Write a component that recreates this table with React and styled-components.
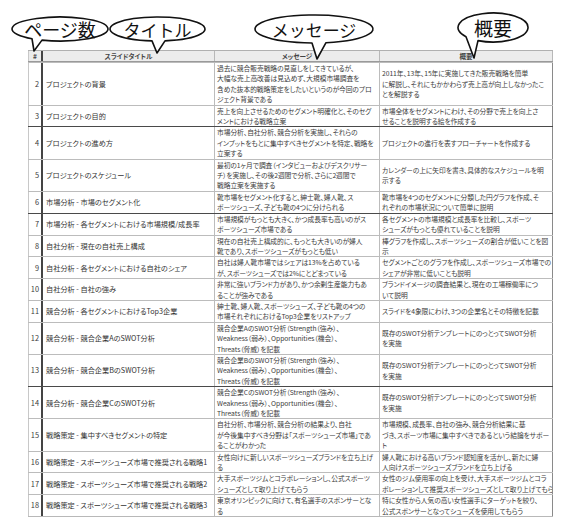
import React from 'react';
import styled, { createGlobalStyle } from 'styled-components';

const GlobalStyle = createGlobalStyle`
  html, body { margin: 0; padding: 0; background: #fff; }
  body { font-family: "Noto Sans CJK JP", "Noto Sans", sans-serif; }
`;

const COLS = '15px 172px 165px 173px';

const Page = styled.div`
  position: relative;
  width: 576px;
  height: 532px;
  overflow: hidden;
  background: #fff;
  padding: 50px 0 0 28px;
  box-sizing: border-box;
`;

const Sheet = styled.div`
  width: 525px;
  border-bottom: 1px solid #b8b8b8;
  font-family: "Noto Sans CJK JP", sans-serif;
  font-feature-settings: "palt";
  color: #3c3c3c;
`;

const HeadRow = styled.div`
  display: grid;
  grid-template-columns: ${COLS};
  height: 12px;
  background: #ececec;
  border-top: 1px solid #b0b0b0;
  border-bottom: 1px solid #9a9a9a;
  box-sizing: border-box;
`;

const HeadCell = styled.div`
  display: flex;
  align-items: center;
  justify-content: center;
  font-size: 6.6px;
  font-weight: 700;
  color: #444;
  border-right: ${p => (p.$dark ? '2px solid #444' : '1px solid #b8b8b8')};
  border-left: ${p => (p.$first ? '1px solid #c8c8c8' : 'none')};
  box-sizing: border-box;
  white-space: nowrap;
`;

const Row = styled.div`
  display: grid;
  grid-template-columns: ${COLS};
  border-top: 1px solid ${p => (p.$strong ? '#4a4a4a' : '#bcbcbc')};
`;

const Cell = styled.div`
  display: flex;
  flex-direction: column;
  justify-content: center;
  padding: 0 0 0 2px;
  box-sizing: border-box;
  font-size: 6.75px;
  letter-spacing: -0.05px;
  line-height: 10.4px;
  white-space: nowrap;
  overflow: hidden;
  border-right: 1px solid ${p => (p.$last ? '#8a8a8a' : '#bcbcbc')};
`;

const NumCell = styled(Cell)`
  align-items: flex-end;
  padding: 0 2px 0 0;
  border-left: 1px solid #c8c8c8;
  border-right: 2px solid #444;
  font-size: 7.4px;
  letter-spacing: 0;
`;

const TitleCell = styled(Cell)`
  padding-left: 3px;
  font-size: 7.2px;
  letter-spacing: 0;
  color: #333;
`;

const Line = styled.span`
  display: block;
`;

const BubbleBox = styled.div`
  position: absolute;
  left: ${p => p.$x}px;
  top: ${p => p.$y}px;
  width: ${p => p.$w}px;
  height: ${p => p.$h}px;
  display: flex;
  align-items: center;
  justify-content: center;
  z-index: 2;
  svg {
    position: absolute;
    left: 0;
    top: 0;
    overflow: visible;
  }
`;

const BubbleLabel = styled.span`
  position: relative;
  font-family: "Noto Sans CJK JP", sans-serif;
  font-size: ${p => p.$fs}px;
  line-height: 1;
  color: #111;
  letter-spacing: ${p => p.$ls || 0}px;
  margin-top: ${p => p.$dy || 0}px;
`;

function Bubble({ x, y, w, h, b1, b2, tip, fs, ls, dy, children }) {
  const rx = w / 2;
  const ry = h / 2;
  const yOn = bx => ry + ry * Math.sqrt(Math.max(0, 1 - ((bx - rx) / rx) ** 2));
  const d = `M ${b1} ${yOn(b1)} A ${rx} ${ry} 0 1 1 ${b2} ${yOn(b2)} L ${tip[0]} ${tip[1]} Z`;
  return (
    <BubbleBox $x={x} $y={y} $w={w} $h={h}>
      <svg width={w} height={h}>
        <path d={d} fill="#fff" stroke="#111" strokeWidth="1.6" strokeLinejoin="round" />
      </svg>
      <BubbleLabel $fs={fs} $ls={ls} $dy={dy}>{children}</BubbleLabel>
    </BubbleBox>
  );
}

const SWOT = L => [
  `競合企業${L}のSWOT分析（Strength（強み）、`,
  'Weakness（弱み）、Opportunities（機会）、',
  'Threats（脅威）を記載',
];
const SWOT_SUM = ['既存のSWOT分析テンプレートにのっとってSWOT分析', 'を実施'];

const rows = [
  {
    n: 2, title: 'プロジェクトの背景',
    msg: ['過去に競合販売戦略の見直しをしてきているが、', '大幅な売上高改善は見込めず、大規模市場調査を', '含めた抜本的戦略策定をしたいというのが今回のプロ', 'ジェクト背景である'],
    sum: ['2011年、13年、15年に実施してきた販売戦略を簡単', 'に解説し、それにもかかわらず売上高が向上しなかったこ', 'とを解説する'],
  },
  {
    n: 3, title: 'プロジェクトの目的',
    msg: ['売上を向上させるためのセグメント明確化と、そのセグ', 'メントにおける戦略立案'],
    sum: ['市場全体をセグメントにわけ、その分野で売上を向上さ', 'せることを説明する絵を作成する'],
  },
  {
    n: 4, title: 'プロジェクトの進め方', strong: true,
    msg: ['市場分析、自社分析、競合分析を実施し、それらの', 'インプットをもとに集中すべきセグメントを特定、戦略を', '立案する'],
    sum: ['プロジェクトの進行を表すフローチャートを作成する'],
  },
  {
    n: 5, title: 'プロジェクトのスケジュール',
    msg: ['最初の1ヶ月で調査（インタビューおよびデスクリサー', 'チ）を実施し、その後2週間で分析、さらに2週間で', '戦略立案を実施する'],
    sum: ['カレンダーの上に矢印を書き、具体的なスケジュールを明', '示する'],
  },
  {
    n: 6, title: '市場分析 - 市場のセグメント化',
    msg: ['靴市場をセグメント化すると、紳士靴、婦人靴、ス', 'ポーツシューズ、子ども靴の4つに分けられる'],
    sum: ['靴市場を4つのセグメントに分類した円グラフを作成、そ', 'れぞれの市場状況について簡単に説明'],
  },
  {
    n: 7, title: '市場分析 - 各セグメントにおける市場規模/成長率', strong: true,
    msg: ['市場規模がもっとも大きく、かつ成長率も高いのがス', 'ポーツシューズ市場である'],
    sum: ['各セグメントの市場規模と成長率を比較し、スポーツ', 'シューズがもっとも優れていることを説明'],
  },
  {
    n: 8, title: '自社分析 - 現在の自社売上構成',
    msg: ['現在の自社売上構成的に、もっとも大きいのが婦人', '靴であり、スポーツシューズがもっとも低い'],
    sum: ['棒グラフを作成し、スポーツシューズの割合が低いことを図', '示'],
  },
  {
    n: 9, title: '自社分析 - 各セグメントにおける自社のシェア',
    msg: ['自社は婦人靴市場ではシェアは13%を占めている', 'が、スポーツシューズでは2%にとどまっている'],
    sum: ['セグメントごとのグラフを作成し、スポーツシューズ市場での', 'シェアが非常に低いことも説明'],
  },
  {
    n: 10, title: '自社分析 - 自社の強み',
    msg: ['非常に強いブランド力があり、かつ余剰生産能力もあ', 'ることが強みである'],
    sum: ['ブランドイメージの調査結果と、現在の工場稼働率につ', 'いて説明'],
  },
  {
    n: 11, title: '競合分析 - 各セグメントにおけるTop3企業',
    msg: ['紳士靴、婦人靴、スポーツシューズ、子ども靴の4つの', '市場それぞれにおけるTop3企業をリストアップ'],
    sum: ['スライドを4象限にわけ、3つの企業名とその特徴を記載'],
  },
  { n: 12, title: '競合分析 - 競合企業AのSWOT分析', msg: SWOT('A'), sum: SWOT_SUM },
  { n: 13, title: '競合分析 - 競合企業BのSWOT分析', msg: SWOT('B'), sum: SWOT_SUM },
  { n: 14, title: '競合分析 - 競合企業CのSWOT分析', msg: SWOT('C'), sum: SWOT_SUM, strong: true },
  {
    n: 15, title: '戦略策定 - 集中すべきセグメントの特定',
    msg: ['自社分析、市場分析、競合分析の結果より、自社', 'が今後集中すべき分野は「スポーツシューズ市場」であ', 'ることがわかった'],
    sum: ['市場規模、成長率、自社の強み、競合分析結果に基', 'づき、スポーツ市場に集中すべきであるという結論をサポー', 'ト'],
  },
  {
    n: 16, title: '戦略策定 - スポーツシューズ市場で推奨される戦略1',
    msg: ['女性向けに新しいスポーツシューズブランドを立ち上げ', 'る'],
    sum: ['婦人靴における高いブランド認知度を活かし、新たに婦', '人向けスポーツシューズブランドを立ち上げる'],
  },
  {
    n: 17, title: '戦略策定 - スポーツシューズ市場で推奨される戦略2',
    msg: ['大手スポーツジムとコラボレーションし、公式スポーツ', 'シューズとして取り上げてもらう'],
    sum: ['女性のジム使用率の向上を受け、大手スポーツジムとコラ', 'ボレーションして推奨スポーツシューズとして取り上げてもら'],
  },
  {
    n: 18, title: '戦略策定 - スポーツシューズ市場で推奨される戦略3',
    msg: ['東京オリンピックに向けて、有名選手のスポンサーとな', 'る'],
    sum: ['特に女性から人気の高い女性選手にターゲットを絞り、', '公式スポンサーとなってシューズを使用してもらう'],
  },
];

const Lines = ({ items }) => items.map((t, i) => <Line key={i}>{t}</Line>);

export default function App() {
  return (
    <>
      <GlobalStyle />
      <Page>
        <Bubble x={12} y={17} w={96} h={24} b1={20} b2={30} tip={[22, 34]} fs={18}>ページ数</Bubble>
        <Bubble x={110} y={17} w={95} h={24} b1={42} b2={55} tip={[47, 36]} fs={17}>タイトル</Bubble>
        <Bubble x={255} y={15} w={118} h={28} b1={57} b2={71} tip={[62, 44]} fs={17}>メッセージ</Bubble>
        <Bubble x={458} y={13} w={70} h={29} b1={8} b2={20} tip={[16, 45]} fs={19}>概要</Bubble>
        <Sheet>
          <HeadRow>
            <HeadCell $first $dark>#</HeadCell>
            <HeadCell>スライドタイトル</HeadCell>
            <HeadCell>メッセージ</HeadCell>
            <HeadCell>概要</HeadCell>
          </HeadRow>
          {rows.map(r => (
            <Row key={r.n} $strong={r.strong}>
              <NumCell>{r.n}</NumCell>
              <TitleCell>{r.title}</TitleCell>
              <Cell><Lines items={r.msg} /></Cell>
              <Cell $last><Lines items={r.sum} /></Cell>
            </Row>
          ))}
        </Sheet>
      </Page>
    </>
  );
}
